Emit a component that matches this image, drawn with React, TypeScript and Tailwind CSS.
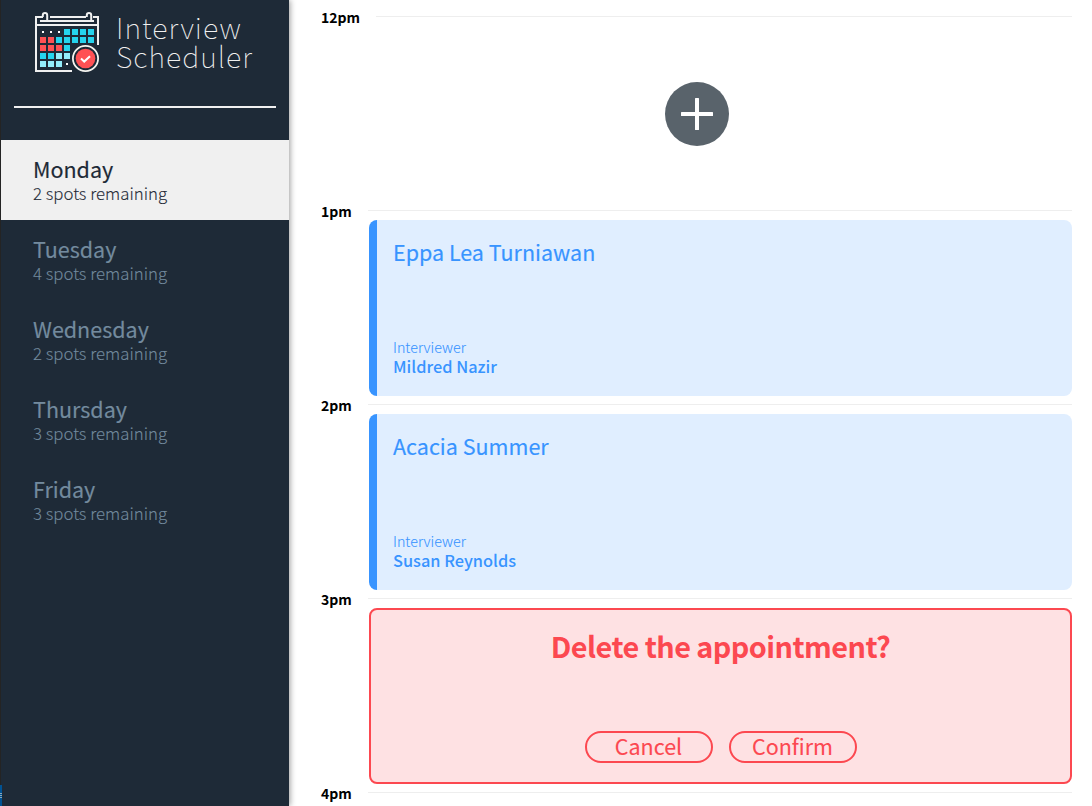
import React from "react";

type Day = { name: string; spots: number };

const days: Day[] = [
  { name: "Monday", spots: 2 },
  { name: "Tuesday", spots: 4 },
  { name: "Wednesday", spots: 2 },
  { name: "Thursday", spots: 3 },
  { name: "Friday", spots: 3 },
];

const CYAN = "#25d4ee";
const RED = "#ff5154";
const PALE = "#93edfb";

const cells: [number, number, string][] = [
  ...[3, 4, 5, 6].map((c): [number, number, string] => [c, 0, CYAN]),
  ...[2, 3, 4, 5, 6].map((c): [number, number, string] => [c, 1, CYAN]),
  ...[0, 1].map((c): [number, number, string] => [c, 1, RED]),
  ...[0, 1, 2].map((c): [number, number, string] => [c, 2, RED]),
  [3, 2, CYAN],
  [0, 3, CYAN],
  [1, 3, CYAN],
  [2, 3, PALE],
  [3, 3, PALE],
  [0, 4, PALE],
  [1, 4, PALE],
  [2, 4, PALE],
];

const dots: [number, number][] = [[0, 0], [1, 0], [2, 0], [3, 4]];

function CalendarLogo() {
  return (
    <svg className="h-[62px] w-[66px] shrink-0" viewBox="35 11 66 62" fill="none">
      <g stroke="#f0f0f0" strokeWidth="2">
        <path d="M43 17H36V71H72" />
        <path d="M50 17H86" />
        <path d="M93 17H98V45" />
        <path d="M40 21H94" />
        <path d="M36 25H98" />
        <path d="M42.8 17V15.2a2.2 2.2 0 0 1 4.4 0V21" />
        <path d="M86.8 17V15.2a2.2 2.2 0 0 1 4.4 0V21" />
      </g>
      {cells.map(([c, r, fill]) => (
        <rect key={`${c}-${r}`} x={40 + c * 8} y={29 + r * 8} width="6" height="6" fill={fill} />
      ))}
      {dots.map(([c, r]) => (
        <rect key={`${c}-${r}`} x={42 + c * 8} y={31 + r * 8} width="2" height="2" fill="#fff" />
      ))}
      <circle cx="85.5" cy="58.5" r="12.6" fill="#1e2a37" stroke="#f5f5f0" strokeWidth="1.8" />
      <circle cx="85.5" cy="58.5" r="9.8" fill={RED} />
      <path d="M81 58.6L84.2 61.6L90 56.2" stroke="#fff" strokeWidth="2" />
    </svg>
  );
}

function Sidebar() {
  return (
    <aside className="relative z-10 flex h-full w-[289px] shrink-0 flex-col border-l border-[#242424] bg-[#1e2a37] shadow-[1px_0_6px_rgba(0,0,0,0.4)]">
      <header className="flex h-[106px] items-start pl-[34px] pt-[11px]">
        <CalendarLogo />
        <h1 className="ml-[15px] mt-px text-[28.7px] font-thin leading-[29px] tracking-[1.02px] text-[#f0f0f0]">
          Interview
          <br />
          Scheduler
        </h1>
      </header>
      <hr className="ml-[13px] w-[262px] border-0 border-t-2 border-[#f0f0f0]" />
      <nav className="mt-8">
        {days.map((day, i) => (
          <div
            key={day.name}
            className={`flex h-20 flex-col pl-8 pt-[17px] ${i === 0 ? "bg-[#f0f0f0] text-[#1e2a37]" : "text-[#738a9e]"}`}
          >
            <h2 className="text-[21.5px] font-normal leading-6 [-webkit-text-stroke:0.15px]">{day.name}</h2>
            <h3 className="text-[16.8px] font-light leading-6 [-webkit-text-stroke:0.1px]">{day.spots} spots remaining</h3>
          </div>
        ))}
      </nav>
      <div className="absolute bottom-0 left-[-1px] flex h-[21px] w-[2px] flex-col items-stretch gap-px bg-[#005293] pt-2">
        <span className="h-px bg-[#8aa7b8]" />
        <span className="h-px bg-[#8aa7b8]" />
        <span className="h-px bg-[#8aa7b8]" />
      </div>
    </aside>
  );
}

function Hour({ label }: { label: string }) {
  return (
    <header className="flex h-5 items-start justify-between">
      <h4 className="mt-[-1px] text-[14px] font-bold leading-5 text-black">{label}</h4>
      <hr className={`mt-[8px] border-0 border-t border-[#eeeeee] ${label === "12pm" ? "w-[696px]" : "w-[704px]"}`} />
    </header>
  );
}

function Booked({ student, interviewer }: { student: string; interviewer: string }) {
  return (
    <article className="ml-12 mt-[-2px] flex h-44 flex-col justify-between rounded-lg border-l-8 border-[#3894ff] bg-[#e0eeff] pb-5 pl-4 pt-5 text-[#3894ff]">
      <h2 className="text-[21.5px] font-normal leading-6 [-webkit-text-stroke:0.15px]">{student}</h2>
      <div>
        <h4 className="text-[14.3px] font-light leading-[21px] [-webkit-text-stroke:0.1px]">Interviewer</h4>
        <h3 className="text-[16.35px] font-medium leading-[19px]">{interviewer}</h3>
      </div>
    </article>
  );
}

function RoundButton({ children }: { children: React.ReactNode }) {
  return (
    <button className="flex h-8 w-32 items-center justify-center rounded-full border-2 border-[#fc4850] pb-[2px] text-[21.5px] font-normal leading-6 [-webkit-text-stroke:0.1px]">
      {children}
    </button>
  );
}

export default function App() {
  return (
    <main
      className="flex h-[806px] w-[1092px] overflow-hidden bg-white font-['Noto_Sans_CJK_JP',sans-serif]"
    >
      <Sidebar />
      <section className="flex w-[783px] shrink-0 flex-col pl-8 pt-2">
        <div className="h-[194px] shrink-0">
          <Hour label="12pm" />
          <div className="mt-[-2px] flex h-44 items-center justify-center">
            <button className="flex size-16 items-center justify-center rounded-full bg-[#59636b]">
              <svg className="size-8" viewBox="0 0 32 32" fill="#fff">
                <rect x="0" y="14" width="32" height="4" rx="0.5" />
                <rect x="14" y="0" width="4" height="32" rx="0.5" />
              </svg>
            </button>
          </div>
        </div>
        <div className="h-[194px] shrink-0">
          <Hour label="1pm" />
          <Booked student="Eppa Lea Turniawan" interviewer="Mildred Nazir" />
        </div>
        <div className="h-[194px] shrink-0">
          <Hour label="2pm" />
          <Booked student="Acacia Summer" interviewer="Susan Reynolds" />
        </div>
        <div className="h-[194px] shrink-0">
          <Hour label="3pm" />
          <article className="ml-12 mt-[-2px] flex h-44 flex-col items-center justify-between rounded-lg border-2 border-[#fc4850] bg-[#fee1e3] pb-[19px] pt-[20px] text-[#fc4850]">
            <h1 className="text-[28.8px] font-bold leading-8 tracking-[-0.53px]">Delete the appointment?</h1>
            <div className="flex gap-4">
              <RoundButton>Cancel</RoundButton>
              <RoundButton>Confirm</RoundButton>
            </div>
          </article>
        </div>
        <Hour label="4pm" />
      </section>
    </main>
  );
}
